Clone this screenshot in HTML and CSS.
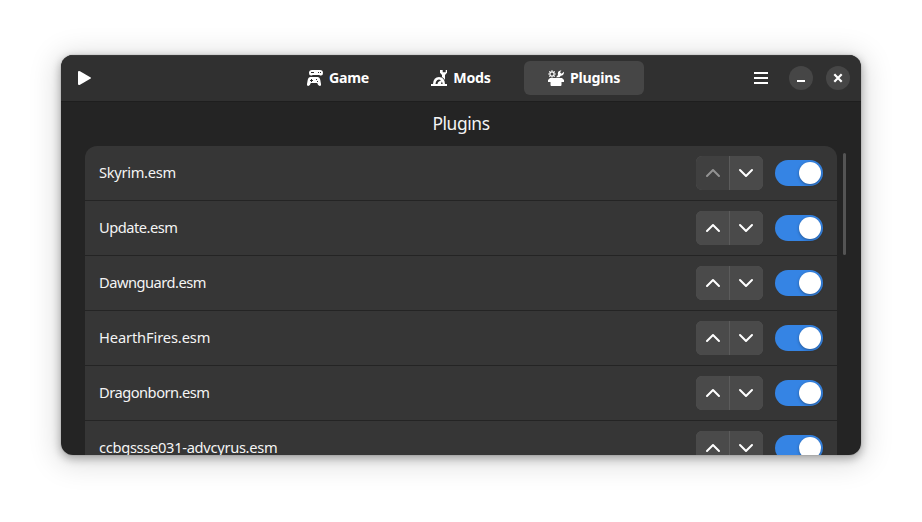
FILE: index.html
```html
<!DOCTYPE html>
<html lang="en">
<head>
<meta charset="utf-8">
<title>Plugins</title>
<link rel="stylesheet" href="styles.css">
</head>
<body>
<svg class="defs" aria-hidden="true">
  <symbol id="up" viewBox="0 0 16 16"><path d="M2 11 8 5l6 6" fill="none" stroke="currentColor" stroke-width="2" stroke-linecap="round" stroke-linejoin="round"/></symbol>
  <symbol id="down" viewBox="0 0 16 16"><path d="M2 5l6 6 6-6" fill="none" stroke="currentColor" stroke-width="2" stroke-linecap="round" stroke-linejoin="round"/></symbol>
</svg>
<main class="window">
  <header class="bar">
    <div class="start"><svg class="icon" viewBox="0 0 16 16"><path fill="currentColor" d="M1 2v12q0 1 1 1 .5 0 1-.2l10.300-6q.7-.3.7-.8t-.7-.8L3 1.200Q2.500 1 2 1 1 1 1 2z"/></svg></div>
    <nav class="tabs">
      <a class="tab"><svg class="icon" viewBox="0 0 16 16"><path fill="currentColor" fill-rule="evenodd" d="M5 0h8q3 0 3 3 0 2.500-2 2.500-1 0-1.700-.5H5.700q-.7.5-1.700.5-2 0-2-2.500 0-3 3-3zM4 2v1h3V2zM11 2v1h1V2zM13 2v1h1V2z"/><path fill="currentColor" fill-rule="evenodd" d="M3.500 7h7q2.200 0 2.800 3l.7 4q.2 2-1.300 2-1.700 0-2.500-3H3.800Q3 16 1.300 16-.2 16 0 14l.7-4q.6-3 2.800-3zM4 9v1H3v1h1v1h1v-1h1v-1H5V9zM9 9v1h1V9zM10 11v1h1v-1z"/></svg><span>Game</span></a>
      <a class="tab"><svg class="icon" viewBox="0 0 16 16"><path fill="currentColor" d="M0 14h16v2H0z"/><path fill="currentColor" fill-rule="evenodd" d="M2 14Q2.500 7 8 7t6 7zM4.500 14h2q0-2 1.500-2.500l2-1.300Q8 8.800 6.300 10 4.600 11.300 4.500 14zM10 14h1.600q0-1.500-.8-2.600z"/><path fill="currentColor" d="M9 0v2.800L11 5v2q2 .8 3 3V5l2-2.200V0h-1.300v2.300h-3V0z"/></svg><span>Mods</span></a>
      <a class="tab active"><svg class="icon" viewBox="0 0 16 16"><circle cx="4" cy="4" r="2.100" fill="none" stroke="currentColor" stroke-width="1.200"/><path fill="none" stroke="currentColor" stroke-width="1.200" d="M4 .2v1.200M4 6.600v1M.2 4h1.200M6.600 4h1.200M1.300 1.300l1 1M5.700 5.700l1 1M6.700 1.300l-1 1M1.300 6.700l1-1"/><path fill="currentColor" d="M8 7.200l2-2.200Q9 .8 13.500.2L12 2.200l1.500 1.500L16 1.800Q16.200 5.700 12.800 5.700L11.500 7.200zM2 8h12l2 2v2h-2.500v3q0 1-1 1h-9q-1 0-1-1v-3H0v-2z"/></svg><span>Plugins</span></a>
    </nav>
    <div class="end">
      <svg class="icon menu" viewBox="0 0 16 16"><path fill="currentColor" d="M1 2h14v2H1zM1 7h14v2H1zM1 12h14v2H1z"/></svg>
      <span class="round"><svg class="icon" viewBox="0 0 16 16"><path fill="currentColor" d="M4 10h8v2H4z"/></svg></span>
      <span class="round"><svg class="icon" viewBox="0 0 16 16"><path fill="none" stroke="currentColor" stroke-width="2.200" d="M4.300 4.300l7.400 7.400M11.700 4.300l-7.400 7.400"/></svg></span>
    </div>
  </header>
  <h1>Plugins</h1>
  <section class="content">
    <ul class="list">
      <li><span class="name">Skyrim.esm</span><span class="move"><i class="off"><svg class="icon"><use href="#up"/></svg></i><i><svg class="icon"><use href="#down"/></svg></i></span><b class="switch"></b></li>
      <li><span class="name tight">Update.esm</span><span class="move"><i><svg class="icon"><use href="#up"/></svg></i><i><svg class="icon"><use href="#down"/></svg></i></span><b class="switch"></b></li>
      <li><span class="name tight">Dawnguard.esm</span><span class="move"><i><svg class="icon"><use href="#up"/></svg></i><i><svg class="icon"><use href="#down"/></svg></i></span><b class="switch"></b></li>
      <li><span class="name loose">HearthFires.esm</span><span class="move"><i><svg class="icon"><use href="#up"/></svg></i><i><svg class="icon"><use href="#down"/></svg></i></span><b class="switch"></b></li>
      <li><span class="name tight">Dragonborn.esm</span><span class="move"><i><svg class="icon"><use href="#up"/></svg></i><i><svg class="icon"><use href="#down"/></svg></i></span><b class="switch"></b></li>
      <li><span class="name">ccbgssse031-advcyrus.esm</span><span class="move"><i><svg class="icon"><use href="#up"/></svg></i><i><svg class="icon"><use href="#down"/></svg></i></span><b class="switch"></b></li>
    </ul>
    <div class="scroll"></div>
  </section>
</main>
</body>
</html>
```
FILE: styles.css
```css
* { box-sizing: border-box; }
body { margin: 0; padding: 55px 61px; height: 522px; overflow: hidden; background: #fff; color: #fff; font: 14.67px/20px "Noto Sans", sans-serif; }
.defs { position: absolute; width: 0; height: 0; }
.icon { display: block; width: 16px; height: 16px; flex: none; }
.window { width: 800px; height: 400px; border-radius: 12px; overflow: hidden; background: #242424; display: flex; flex-direction: column; box-shadow: 0 3px 9px 1px rgba(0,0,0,.28), 0 4px 28px 6px rgba(0,0,0,.13), 0 0 0 1px rgba(0,0,0,.05); }
.bar { flex: none; height: 47px; background: #303030; border-bottom: 1px solid #1e1e1e; box-shadow: inset 0 1px #383838; display: grid; grid-template-columns: 1fr auto 1fr; align-items: center; padding: 0 11px 0 16px; }
.tabs { display: flex; gap: 3px; margin: 0 3px 0 -2px; }
.tab { width: 120px; height: 34px; border-radius: 6px; display: flex; align-items: center; justify-content: center; gap: 6px; font-weight: 700; font-size: 14.2px; letter-spacing: -.25px; }
.tab.active { background: #464646; }
.end { display: flex; justify-content: flex-end; align-items: center; gap: 13px; }
.menu { margin-right: 7px; }
.round { width: 24px; height: 24px; border-radius: 50%; background: #464646; display: flex; align-items: center; justify-content: center; }
h1 { margin: 0; height: 44px; flex: none; text-align: center; font-size: 17.4px; font-weight: 400; line-height: 43px; letter-spacing: -.4px; color: #f4f4f4; }
.content { display: flex; padding-left: 24px; min-height: 0; }
.list { list-style: none; margin: 0; padding: 0; width: 752px; height: 330px; flex: none; border-radius: 12px 12px 0 0; background: #363636; overflow: hidden; }
.list li { height: 55px; border-bottom: 1px solid #242424; padding: 0 14px; display: flex; align-items: center; }
.name { flex: 1; letter-spacing: -.3px; padding-bottom: 2px; color: #f4f4f4; }
.name.tight { letter-spacing: -.5px; }
.name.loose { letter-spacing: -.12px; }
.move { display: flex; gap: 1px; width: 67px; height: 34px; border-radius: 6px; overflow: hidden; background: #5b5b5b; }
.move i { flex: none; width: 33px; background: #4a4a4a; display: flex; align-items: center; justify-content: center; }
.move i:first-child { padding-left: 1px; }
.move i + i { padding-right: 1px; }
.move .off { background: #404040; color: #939393; }
.switch { width: 48px; height: 26px; margin-left: 12px; border-radius: 13px; background: #3584e4; padding: 2px; display: flex; justify-content: flex-end; }
.switch::after { content: ""; width: 22px; height: 22px; border-radius: 50%; background: #fff; box-shadow: 0 1px 3px rgba(0,0,0,.35); }
.scroll { width: 3px; height: 102px; margin: 7px 0 0 6px; border-radius: 2px; background: #545454; }
```
